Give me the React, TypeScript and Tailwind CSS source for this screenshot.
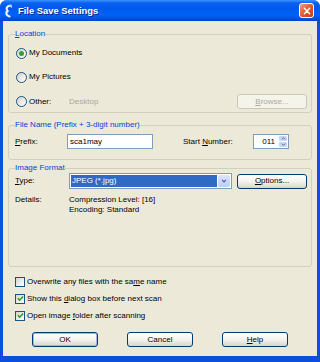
import type { ReactNode } from "react";

function Radio({ checked }: { checked?: boolean }) {
  return (
    <span className="ml-[1px] w-[11px] h-[11px] rounded-full border border-[#1c5180] bg-linear-to-br from-[#d6d5cc] to-white flex items-center justify-center shrink-0">
      {checked && <span className="w-[5px] h-[5px] rounded-full bg-[#2ea52e]" />}
    </span>
  );
}

function Check({ checked }: { checked?: boolean }) {
  return (
    <span className="w-[10px] h-[10px] border border-[#1c5180] bg-linear-to-br from-[#d6d5cc] to-white flex items-center justify-center shrink-0">
      {checked && (
        <svg viewBox="0 0 8 8" className="w-[7px] h-[7px]">
          <path d="M1 3.8 L3 6 L7 1.6" stroke="#21a121" strokeWidth="1.7" fill="none" />
        </svg>
      )}
    </span>
  );
}

function Btn({
  children,
  className = "",
  disabled,
  primary,
}: {
  children: ReactNode;
  className?: string;
  disabled?: boolean;
  primary?: boolean;
}) {
  return (
    <div
      className={
        "h-[15px] rounded-[3px] border flex items-center justify-center shrink-0 " +
        (disabled
          ? "border-[#c9c7ba] bg-[#f5f4ea] text-[#aca899] "
          : "border-[#003c74] bg-linear-to-b from-white via-[#f4f3ee] to-[#d9d6c8] text-black ") +
        (primary ? "shadow-[inset_0_0_0_1px_#9ab8ef] " : "") +
        className
      }
    >
      {children}
    </div>
  );
}

function U({ children }: { children: ReactNode }) {
  return <span className="underline underline-offset-[1px]">{children}</span>;
}

function Group({ title, children, className = "" }: { title: ReactNode; children: ReactNode; className?: string }) {
  return (
    <fieldset className={"border border-[#d0d0bf] rounded-[3px] pl-[6px] pr-[4px] " + className}>
      <legend className="text-[#0046d5] leading-[10px] px-0">{title}</legend>
      {children}
    </fieldset>
  );
}

export default function App() {
  return (
    <div className="w-[320px] h-[362px] bg-[#0b4fdc] rounded-t-[7px] flex flex-col overflow-hidden font-['Liberation_Sans',Arial,sans-serif] text-[8px] leading-[10px] text-black">
      {/* title bar */}
      <div className="h-[21px] shrink-0 flex items-center pl-[3px] pr-[6px] bg-[linear-gradient(to_bottom,#3d95ff_0%,#0a62f0_14%,#0058ee_40%,#0062f7_70%,#0052e4_88%,#0040cc_100%)]">
        <svg viewBox="0 0 10 14" className="w-[10px] h-[14px] shrink-0">
          <path d="M7.5 1.5 C4 2 2.5 4.5 4.5 7 C2.5 8.5 3 11.5 6.5 12.5" stroke="#eef4ff" strokeWidth="2.2" fill="none" strokeLinecap="round" />
          <path d="M7.5 1.5 L8.5 3" stroke="#b9cff5" strokeWidth="1.5" strokeLinecap="round" />
        </svg>
        <span className="ml-[5px] text-white font-bold text-[9.4px] [text-shadow:1px_1px_0_#0a2a8a]">File Save Settings</span>
        <div className="ml-auto w-[15px] h-[15px] rounded-[3px] border border-white bg-linear-to-br from-[#f09a78] via-[#e05a2e] to-[#c23d12] flex items-center justify-center">
          <svg viewBox="0 0 9 9" className="w-[8px] h-[8px]">
            <path d="M1.5 1.5 L7.5 7.5 M7.5 1.5 L1.5 7.5" stroke="white" strokeWidth="1.6" strokeLinecap="round" />
          </svg>
        </div>
      </div>

      {/* body */}
      <div className="flex-1 mx-[3px] mb-[6px] bg-[#ece9d8] flex flex-col px-[5px]">
        <Group title={<><U>L</U>ocation</>} className="mt-[8px] pb-[3px]">
          <div className="mt-[6px] h-[16px] flex items-center gap-[2px]">
            <Radio checked />
            <span>My Documents</span>
          </div>
          <div className="mt-[8px] h-[16px] flex items-center gap-[2px]">
            <Radio />
            <span>My Pictures</span>
          </div>
          <div className="mt-[9px] h-[15px] flex items-center gap-[2px]">
            <Radio />
            <span className="w-[38px]">Other:</span>
            <span className="text-[#aca899]">Desktop</span>
            <Btn disabled className="ml-auto w-[70px]">
              <U>B</U>rowse...
            </Btn>
          </div>
        </Group>

        <Group title="File Name (Prefix + 3-digit number)" className="mt-[7px] pb-[10px]">
          <div className="mt-[4px] h-[15px] flex items-center">
            <span className="w-[52px]">
              <U>P</U>refix:
            </span>
            <div className="w-[86px] h-[15px] border border-[#7f9db9] bg-white flex items-center pl-[2px]">sca1may</div>
            <span className="ml-[30px] w-[70px]">
              Start <U>N</U>umber:
            </span>
            <div className="w-[36px] h-[15px] border border-[#7f9db9] bg-white flex">
              <span className="flex-1 flex items-center justify-end pr-[3px]">011</span>
              <div className="w-[10px] flex flex-col gap-px p-px">
                <div className="flex-1 rounded-[1px] bg-[#c6d5f7] flex items-center justify-center">
                  <svg viewBox="0 0 6 4" className="w-[5px] h-[3px]">
                    <path d="M0.8 3.2 L3 1 L5.2 3.2" stroke="#4d6185" strokeWidth="1.2" fill="none" />
                  </svg>
                </div>
                <div className="flex-1 rounded-[1px] bg-[#c6d5f7] flex items-center justify-center">
                  <svg viewBox="0 0 6 4" className="w-[5px] h-[3px]">
                    <path d="M0.8 0.8 L3 3 L5.2 0.8" stroke="#4d6185" strokeWidth="1.2" fill="none" />
                  </svg>
                </div>
              </div>
            </div>
          </div>
        </Group>

        <Group title="Image Format" className="mt-[3px] pb-[51px]">
          <div className="h-[16px] flex items-center">
            <span className="w-[54px]">
              <U>T</U>ype:
            </span>
            <div className="w-[163px] h-[16px] border border-[#7f9db9] bg-white flex p-px">
              <div className="flex-1 bg-[#316ac5] text-white flex items-center pl-[1px]">JPEG (*.jpg)</div>
              <div className="w-[12px] ml-px rounded-[2px] bg-linear-to-b from-[#dde7fc] to-[#b8cdf7] flex items-center justify-center">
                <svg viewBox="0 0 7 5" className="w-[6px] h-[4px]">
                  <path d="M1 1 L3.5 3.6 L6 1" stroke="#4d6185" strokeWidth="1.4" fill="none" />
                </svg>
              </div>
            </div>
            <Btn className="ml-[5px] w-[70px]">
              <U>O</U>ptions...
            </Btn>
          </div>
          <div className="mt-[6px] flex">
            <span className="w-[54px]">Details:</span>
            <div className="flex flex-col">
              <span>Compression Level: [16]</span>
              <span>Encoding: Standard</span>
            </div>
          </div>
        </Group>

        <div className="mt-[6px] ml-[7px] flex flex-col">
          <div className="h-[17px] flex items-center gap-[2px]">
            <Check />
            <span>
              Overwrite any files with the sa<U>m</U>e name
            </span>
          </div>
          <div className="h-[17px] flex items-center gap-[2px]">
            <Check checked />
            <span>
              Show this <U>d</U>ialog box before next scan
            </span>
          </div>
          <div className="h-[17px] flex items-center gap-[2px]">
            <Check checked />
            <span>
              Open image <U>f</U>older after scanning
            </span>
          </div>
        </div>

        <div className="mt-[8px] flex justify-center gap-[29px]">
          <Btn primary className="w-[66px]">OK</Btn>
          <Btn className="w-[66px]">Cancel</Btn>
          <Btn className="w-[66px]">
            <U>H</U>elp
          </Btn>
        </div>
      </div>
    </div>
  );
}
